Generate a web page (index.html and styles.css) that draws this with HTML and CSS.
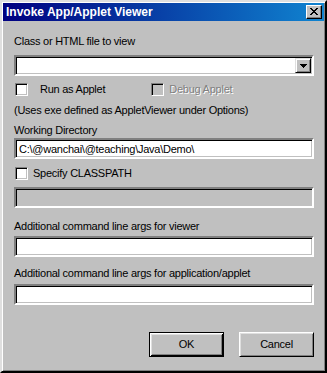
FILE: index.html
```html
<!DOCTYPE html>
<html lang="en">
<head>
    <meta charset="UTF-8">
    <meta name="viewport" content="width=device-width, initial-scale=1.0">
    <title>Invoke App/Applet Viewer</title>
    <link rel="stylesheet" href="styles.css">
</head>
<body>

    <div class="window">
        <div class="titlebar">
            <span class="title">Invoke App/Applet Viewer</span>
            <div class="close-btn">
                <svg width="8" height="7" viewBox="0 0 8 7" shape-rendering="crispEdges">
                    <path d="M0 0h2v1h-2zM6 0h2v1h-2zM1 1h2v1h-2zM5 1h2v1h-2zM2 2h4v1h-4zM3 3h2v1h-2zM2 4h4v1h-4zM1 5h2v1h-2zM5 5h2v1h-2zM0 6h2v1h-2zM6 6h2v1h-2z" fill="#000"/>
                </svg>
            </div>
        </div>

        <div class="content">
            <div class="label">Class or HTML file to view</div>
            <div class="field combo">
                <div class="combo-btn">
                    <svg width="7" height="4" viewBox="0 0 7 4" shape-rendering="crispEdges">
                        <path d="M0 0h7v1h-7zM1 1h5v1h-5zM2 2h3v1h-3zM3 3h1v1h-1z" fill="#000"/>
                    </svg>
                </div>
            </div>

            <div class="check-row first-row">
                <div class="check-item">
                    <span class="checkbox"></span>
                    <span class="run-label">Run as Applet</span>
                </div>
                <div class="check-item disabled">
                    <span class="checkbox"></span>
                    <span>Debug Applet</span>
                </div>
            </div>

            <div class="note">(Uses exe defined as AppletViewer under Options)</div>

            <div class="label workdir-label">Working Directory</div>
            <div class="field text-field workdir">C:\@wanchai\@teaching\Java\Demo\</div>

            <div class="check-row classpath-row">
                <div class="check-item">
                    <span class="checkbox"></span>
                    <span>Specify CLASSPATH</span>
                </div>
            </div>
            <div class="field text-field off classpath"></div>

            <div class="label viewer-label">Additional command line args for viewer</div>
            <div class="field text-field viewer"></div>

            <div class="label app-label">Additional command line args for application/applet</div>
            <div class="field text-field app"></div>

            <div class="buttons">
                <div class="btn default"><span>OK</span></div>
                <div class="btn"><span>Cancel</span></div>
            </div>
        </div>
    </div>

</body>
</html>
```

FILE: styles.css
```css
body {
    margin: 0;
    background-color: #c0c0c0;
}

.window {
    width: 327px;
    height: 373px;
    box-sizing: border-box;
    padding: 1px;
    background-color: #c0c0c0;
    border: 2px solid;
    border-color: #dfdfdf #000 #000 #dfdfdf;
    box-shadow: inset 1px 1px #fff, inset -1px -1px #808080;
    font-family: "Liberation Sans", Arial, sans-serif;
    font-size: 11px;
    line-height: 13px;
    color: #000;
    display: flex;
    flex-direction: column;
}

/* title bar */
.titlebar {
    height: 18px;
    display: flex;
    align-items: center;
    justify-content: space-between;
    padding: 0 2px 0 3px;
    background: linear-gradient(to right, #000080, #1084d0);
    color: #fff;
}

.title {
    font-size: 12px;
    font-weight: bold;
}

.close-btn {
    width: 16px;
    height: 14px;
    box-sizing: border-box;
    background-color: #c0c0c0;
    border: 1px solid;
    border-color: #fff #000 #000 #fff;
    box-shadow: inset -1px -1px #808080;
    display: flex;
    align-items: center;
    justify-content: center;
    padding: 0 1px 1px 0;
}

.close-btn svg {
    display: block;
}

/* dialog body */
.content {
    padding: 14px 10px 0 11px;
    display: flex;
    flex-direction: column;
    letter-spacing: -0.25px;
}

.field {
    height: 21px;
    box-sizing: border-box;
    background-color: #fff;
    border: 2px solid;
    border-color: #808080 #fff #fff #808080;
    box-shadow: inset 1px 1px #000, inset -1px -1px #c0c0c0;
}

.field.off {
    background-color: #c0c0c0;
}

.combo {
    margin-top: 7px;
    display: flex;
    justify-content: flex-end;
    padding: 1px;
}

.combo-btn {
    width: 16px;
    height: 100%;
    box-sizing: border-box;
    background-color: #c0c0c0;
    border: 1px solid;
    border-color: #dfdfdf #000 #000 #dfdfdf;
    box-shadow: inset 1px 1px #fff, inset -1px -1px #808080;
    display: flex;
    align-items: center;
    justify-content: center;
}

.combo-btn svg {
    display: block;
}

.text-field {
    padding: 3px 3px 0;
    white-space: nowrap;
}

.check-row {
    display: flex;
    align-items: center;
    height: 13px;
}

.first-row {
    margin-top: 7px;
}

.check-item {
    display: flex;
    align-items: center;
    gap: 5px;
    margin-left: 1px;
}

.check-item + .check-item {
    margin-left: 46px;
}

.checkbox {
    width: 13px;
    height: 13px;
    box-sizing: border-box;
    background-color: #fff;
    border: 1px solid;
    border-color: #808080 #fff #fff #808080;
    box-shadow: inset 1px 1px #000, inset -1px -1px #c0c0c0;
}

.run-label {
    margin-left: 7px;
}

.check-item.disabled {
    color: #808080;
    text-shadow: 1px 1px #fff;
}

.check-item.disabled .checkbox {
    background-color: #c0c0c0;
}

.note {
    margin-top: 8px;
}

.workdir-label {
    margin-top: 7px;
}

.workdir {
    margin-top: 1px;
}

.classpath-row {
    margin-top: 8px;
}

.classpath {
    margin-top: 7px;
}

.viewer-label {
    margin-top: 12px;
}

.viewer {
    margin-top: 3px;
}

.app-label {
    margin-top: 10px;
}

.app {
    margin-top: 4px;
}

/* buttons */
.buttons {
    margin-top: 27px;
    display: flex;
    justify-content: flex-end;
    gap: 15px;
}

.btn {
    width: 75px;
    height: 25px;
    box-sizing: border-box;
    background-color: #c0c0c0;
    border: 1px solid;
    border-color: #fff #000 #000 #fff;
    box-shadow: inset 1px 1px #dfdfdf, inset -1px -1px #808080;
    display: flex;
    align-items: center;
    justify-content: center;
}

.btn.default {
    border: 1px solid #000;
    box-shadow: inset 1px 1px #fff, inset -1px -1px #000, inset 2px 2px #dfdfdf, inset -2px -2px #808080;
}
```
